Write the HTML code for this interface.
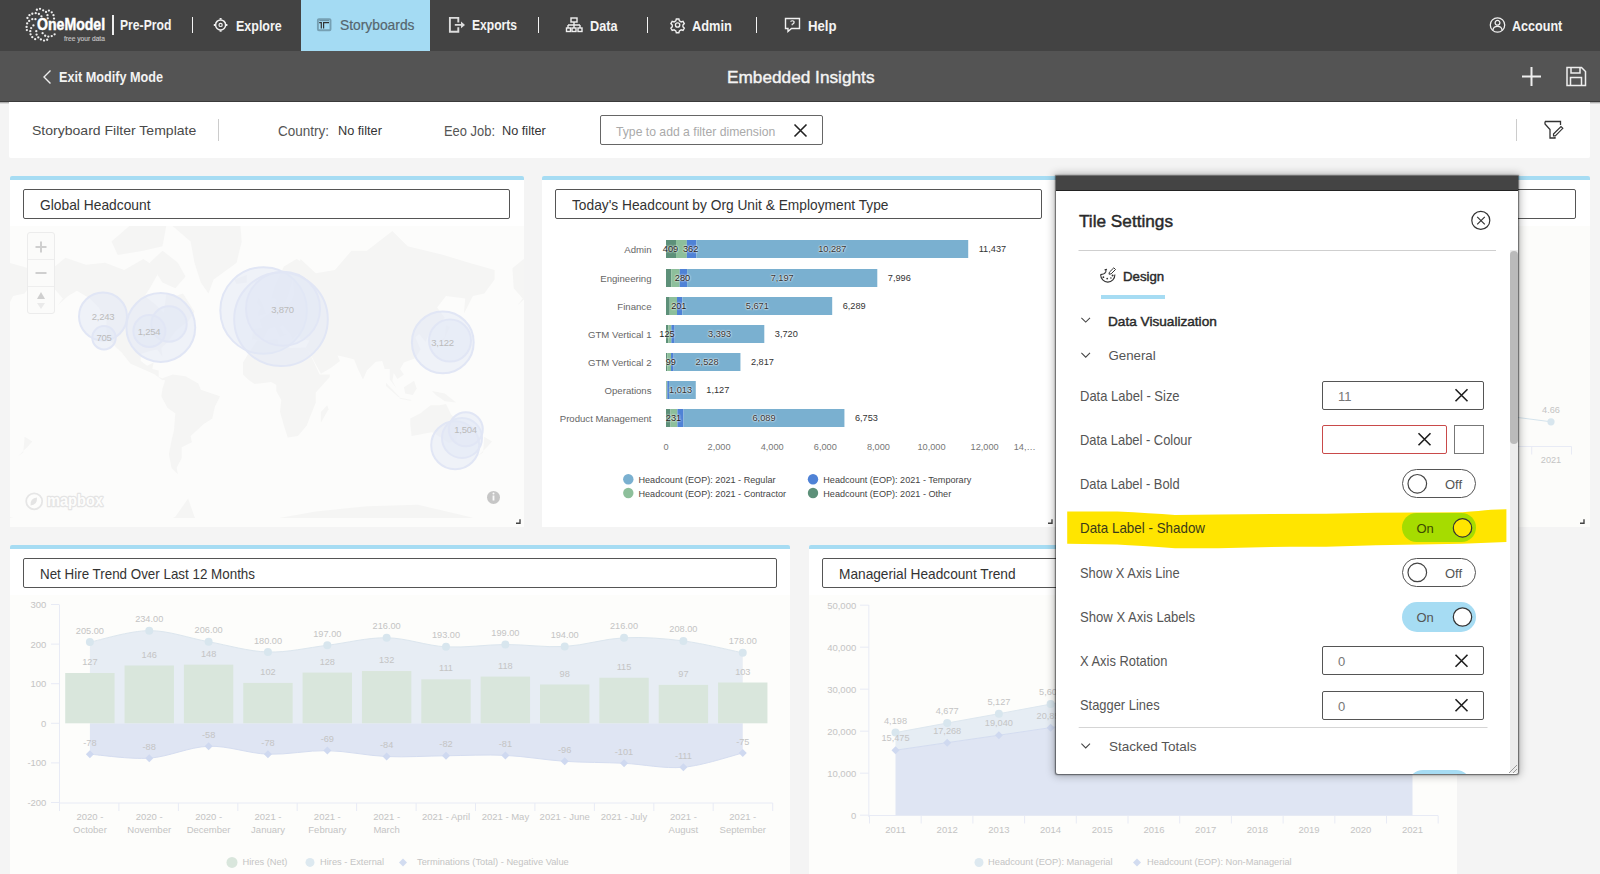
<!DOCTYPE html><html><head><meta charset="utf-8"><style>
html,body{margin:0;padding:0;}body{width:1600px;height:874px;overflow:hidden;position:relative;background:#f4f4f4;font-family:"Liberation Sans",sans-serif;}
div{box-sizing:border-box;}svg{position:absolute;overflow:visible;}
</style></head><body>
<div style="position:absolute;left:0px;top:0px;width:1600px;height:51px;background:#434343;"></div>
<div style="position:absolute;left:301px;top:0px;width:129px;height:51px;background:#a4dbf3;"></div>
<svg style="left:0;top:0" width="120" height="50"><circle cx="36.88" cy="9.73" r="1.15" fill="#eee"/><circle cx="40.02" cy="8.87" r="1.15" fill="#eee"/><circle cx="43.17" cy="10.30" r="1.15" fill="#eee"/><circle cx="46.03" cy="12.01" r="1.15" fill="#eee"/><circle cx="48.89" cy="10.58" r="1.15" fill="#eee"/><circle cx="51.75" cy="12.30" r="1.15" fill="#eee"/><circle cx="53.47" cy="15.16" r="1.15" fill="#eee"/><circle cx="54.04" cy="18.59" r="1.15" fill="#eee"/><circle cx="47.46" cy="15.16" r="1.15" fill="#eee"/><circle cx="47.75" cy="18.31" r="1.15" fill="#eee"/><circle cx="32.30" cy="13.73" r="1.15" fill="#eee"/><circle cx="35.73" cy="13.16" r="1.15" fill="#eee"/><circle cx="38.88" cy="14.02" r="1.15" fill="#eee"/><circle cx="41.45" cy="16.30" r="1.15" fill="#eee"/><circle cx="29.44" cy="15.16" r="1.15" fill="#eee"/><circle cx="27.44" cy="18.02" r="1.15" fill="#eee"/><circle cx="29.15" cy="20.88" r="1.15" fill="#eee"/><circle cx="32.30" cy="19.16" r="1.15" fill="#eee"/><circle cx="35.45" cy="19.16" r="1.15" fill="#eee"/><circle cx="27.15" cy="23.46" r="1.15" fill="#eee"/><circle cx="33.44" cy="25.46" r="1.15" fill="#eee"/><circle cx="26.58" cy="26.89" r="1.15" fill="#eee"/><circle cx="31.16" cy="28.03" r="1.15" fill="#eee"/><circle cx="26.86" cy="30.03" r="1.15" fill="#eee"/><circle cx="30.30" cy="31.18" r="1.15" fill="#eee"/><circle cx="36.30" cy="31.18" r="1.15" fill="#eee"/><circle cx="30.58" cy="34.32" r="1.15" fill="#eee"/><circle cx="36.59" cy="34.61" r="1.15" fill="#eee"/><circle cx="32.30" cy="37.19" r="1.15" fill="#eee"/><circle cx="38.31" cy="37.47" r="1.15" fill="#eee"/><circle cx="35.16" cy="39.19" r="1.15" fill="#eee"/><circle cx="40.88" cy="39.47" r="1.15" fill="#eee"/><circle cx="44.03" cy="40.62" r="1.15" fill="#eee"/><circle cx="47.17" cy="39.76" r="1.15" fill="#eee"/><circle cx="42.60" cy="33.18" r="1.15" fill="#eee"/><circle cx="45.17" cy="35.76" r="1.15" fill="#eee"/><circle cx="48.32" cy="36.61" r="1.15" fill="#eee"/><circle cx="51.75" cy="36.04" r="1.15" fill="#eee"/><circle cx="54.61" cy="34.32" r="1.15" fill="#eee"/></svg>
<div style="position:absolute;left:36.60px;top:17.30px;font-size:15.922px;line-height:15.922px;font-weight:700;color:#fff;white-space:nowrap;transform:scaleX(0.8857);transform-origin:0 0;-webkit-text-stroke:0.45px #fff;">OneModel</div>
<div style="position:absolute;left:63.80px;top:34.60px;font-size:6.983px;line-height:6.983px;font-weight:400;color:#c4c4c4;white-space:nowrap;transform:scaleX(0.9508);transform-origin:0 0;-webkit-text-stroke:0.15px #c4c4c4;">free your data</div>
<div style="position:absolute;left:112px;top:15px;width:2px;height:20px;background:#eee;"></div>
<div style="position:absolute;left:119.60px;top:18.20px;font-size:14.246px;line-height:14.246px;font-weight:700;color:#f4f4f4;white-space:nowrap;transform:scaleX(0.8549);transform-origin:0 0;">Pre-Prod</div>
<div style="position:absolute;left:192px;top:17px;width:1.3px;height:15.5px;background:#f4f4f4;"></div>
<div style="position:absolute;left:538px;top:17px;width:1.3px;height:15.5px;background:#f4f4f4;"></div>
<div style="position:absolute;left:647px;top:17px;width:1.3px;height:15.5px;background:#f4f4f4;"></div>
<div style="position:absolute;left:756px;top:17px;width:1.3px;height:15.5px;background:#f4f4f4;"></div>
<div style="position:absolute;left:236.00px;top:18.50px;font-size:14.385px;line-height:14.385px;font-weight:700;color:#f4f4f4;white-space:nowrap;transform:scaleX(0.8685);transform-origin:0 0;">Explore</div>
<div style="position:absolute;left:339.50px;top:18.40px;font-size:14.106px;line-height:14.106px;font-weight:400;color:#56666e;white-space:nowrap;transform:scaleX(0.9803);transform-origin:0 0;-webkit-text-stroke:0.2px #56666e;">Storyboards</div>
<div style="position:absolute;left:472.20px;top:19.40px;font-size:13.966px;line-height:13.966px;font-weight:700;color:#f4f4f4;white-space:nowrap;transform:scaleX(0.8681);transform-origin:0 0;">Exports</div>
<div style="position:absolute;left:589.80px;top:18.50px;font-size:14.246px;line-height:14.246px;font-weight:700;color:#f4f4f4;white-space:nowrap;transform:scaleX(0.8911);transform-origin:0 0;">Data</div>
<div style="position:absolute;left:692.40px;top:18.50px;font-size:14.246px;line-height:14.246px;font-weight:700;color:#f4f4f4;white-space:nowrap;transform:scaleX(0.9011);transform-origin:0 0;">Admin</div>
<div style="position:absolute;left:807.70px;top:18.50px;font-size:14.246px;line-height:14.246px;font-weight:700;color:#f4f4f4;white-space:nowrap;transform:scaleX(0.9268);transform-origin:0 0;">Help</div>
<div style="position:absolute;left:1511.50px;top:18.90px;font-size:14.385px;line-height:14.385px;font-weight:700;color:#f4f4f4;white-space:nowrap;transform:scaleX(0.8748);transform-origin:0 0;">Account</div>
<svg style="left:0;top:0" width="1600" height="50" fill="none" stroke="#f0f0f0" stroke-width="1.5">
<g transform="translate(220.6,24.9)"><circle r="5" /><circle r="1.6" stroke-width="1.2"/><path d="M0,-6.8v1.5M0,6.8v-1.5M-6.8,0h1.5M6.8,0h-1.5" stroke-width="2"/></g>
<g><rect x="317.9" y="19.1" width="12.6" height="11.2" rx="1" stroke="#76a0b3" stroke-width="1.9"/><path d="M319.3,20.6H329" stroke="#6a8fa0" stroke-width="1.1"/><path d="M319.2,22.6H321.3V28.4M323.6,28.4V22.6H329" stroke="#333" stroke-width="1.2"/></g>
<g stroke="#ddd" stroke-width="1.9"><path d="M458.3,22.6V17.9H449.9V31.8H458.3V27.2M454.8,24.9H461.5"/><path d="M461,21.6L465,24.9L461,28.2Z" fill="#ddd" stroke="none"/></g>
<g stroke-width="1.4"><rect x="571" y="18" width="6" height="4"/><path d="M574,22v3M568,25h12M568,25v3M574,25v3M580,25v3"/><rect x="566.5" y="28" width="4" height="3.5"/><rect x="572" y="28" width="4" height="3.5"/><rect x="578" y="28" width="4" height="3.5"/></g>
<g transform="translate(677.6,25) scale(0.86)" stroke-width="1.6"><circle r="2.5"/><path d="M-1.5,-7h3l0.6,2.2l2,1.2l2.2,-0.7l1.5,2.6l-1.6,1.6v2.2l1.6,1.6l-1.5,2.6l-2.2,-0.7l-2,1.2l-0.6,2.2h-3l-0.6,-2.2l-2,-1.2l-2.2,0.7l-1.5,-2.6l1.6,-1.6v-2.2l-1.6,-1.6l1.5,-2.6l2.2,0.7l2,-1.2z"/></g>
<g stroke-width="1.4"><path d="M785.5,18.5h14v10h-8l-3.5,3v-3h-2.5z"/><path d="M790.5,21.5q2,-1.5 3.5,0q0.5,2 -1.8,2.8v1" stroke-width="1.2"/></g>
<g transform="translate(1497.5,25)" stroke-width="1.3"><circle r="7.2"/><circle cy="-2.2" r="2.4"/><path d="M-4.6,5.2q0.5,-3.8 4.6,-3.8q4.1,0 4.6,3.8"/></g>
</svg>
<div style="position:absolute;left:0px;top:51px;width:1600px;height:50px;background:#545454;"></div>
<div style="position:absolute;left:0px;top:101px;width:1600px;height:1px;background:#3a3a3a;"></div>
<div style="position:absolute;left:0px;top:102px;width:1600px;height:1.5px;background:linear-gradient(#9a9a9a,#f0f0f0);"></div>
<svg style="left:0;top:50" width="1600" height="52" fill="none" stroke="#eee" stroke-width="1.4"><path d="M50.5,20.5l-6.5,6.5l6.5,6.5"/><path d="M1531.5,17v19M1522,26.5h19" stroke-width="2"/><path d="M1567,17.5h14.5l4,4v14h-18.5z" stroke-width="1.5"/><path d="M1571,17.5v5.5h9v-5.5M1570.5,35.5v-8h11v8" stroke-width="1.5"/></svg>
<div style="position:absolute;left:58.75px;top:70.20px;font-size:14.246px;line-height:14.246px;font-weight:700;color:#f2f2f2;white-space:nowrap;transform:scaleX(0.8885);transform-origin:0 0;">Exit Modify Mode</div>
<div style="position:absolute;left:726.50px;top:69.75px;font-size:16.969px;line-height:16.969px;font-weight:400;color:#f4f4f4;white-space:nowrap;transform:scaleX(1.0163);transform-origin:0 0;-webkit-text-stroke:0.4px #f4f4f4;">Embedded Insights</div>
<div style="position:absolute;left:9px;top:102px;width:1581px;height:56px;background:#fff;border-radius:0 0 2px 2px;"></div>
<div style="position:absolute;left:32.25px;top:124.40px;font-size:13.547px;line-height:13.547px;font-weight:400;color:#4a4a4a;white-space:nowrap;transform:scaleX(1.0367);transform-origin:0 0;">Storyboard Filter Template</div>
<div style="position:absolute;left:218px;top:119px;width:1px;height:22px;background:#ccc;"></div>
<div style="position:absolute;left:277.90px;top:123.60px;font-size:14.246px;line-height:14.246px;font-weight:400;color:#555;white-space:nowrap;transform:scaleX(0.9480);transform-origin:0 0;">Country:</div>
<div style="position:absolute;left:337.90px;top:124.60px;font-size:12.709px;line-height:12.709px;font-weight:400;color:#333;white-space:nowrap;transform:scaleX(1.0041);transform-origin:0 0;">No filter</div>
<div style="position:absolute;left:443.50px;top:123.60px;font-size:14.246px;line-height:14.246px;font-weight:400;color:#555;white-space:nowrap;transform:scaleX(0.9077);transform-origin:0 0;">Eeo Job:</div>
<div style="position:absolute;left:502.40px;top:124.60px;font-size:12.709px;line-height:12.709px;font-weight:400;color:#333;white-space:nowrap;transform:scaleX(1.0019);transform-origin:0 0;">No filter</div>
<div style="position:absolute;left:600px;top:115px;width:223px;height:30px;border:1px solid #666;border-radius:2px;background:#fff;"></div>
<div style="position:absolute;left:616.0px;top:125.8px;font-size:12.2px;line-height:12.2px;font-weight:400;color:#aaa;white-space:nowrap;">Type to add a filter dimension</div>
<svg style="left:0;top:0" width="1600" height="160" fill="none" stroke="#222" stroke-width="1.6"><path d="M794.5,124.5l12,12M806.5,124.5l-12,12"/></svg>
<div style="position:absolute;left:1516px;top:119px;width:1px;height:22px;background:#ccc;"></div>
<svg style="left:0;top:0" width="1600" height="160" fill="none" stroke="#333" stroke-width="1.3"><path d="M1545,121.5h15.5v3.5M1545,121.5v2.5l5,5.5v8.5h5v-1"/><path d="M1553.5,134l7.5,-7.5l1.8,1.8l-7.5,7.5h-1.8z" stroke-width="1.2"/></svg>
<div style="position:absolute;left:10px;top:176px;width:514px;height:351px;background:#fff;border-top:4px solid #a6dcf3;border-radius:2px 2px 0 0;"></div>
<div style="position:absolute;left:23px;top:189px;width:486.5px;height:29.5px;border:1px solid #555;border-radius:2px;background:#fff;"></div>
<div style="position:absolute;left:40.00px;top:198.50px;font-size:13.966px;line-height:13.966px;font-weight:400;color:#333;white-space:nowrap;transform:scaleX(0.9892);transform-origin:0 0;">Global Headcount</div>
<div style="position:absolute;left:542px;top:176px;width:515px;height:351px;background:#fff;border-top:4px solid #a6dcf3;border-radius:2px 2px 0 0;"></div>
<div style="position:absolute;left:555px;top:189px;width:487.0px;height:29.5px;border:1px solid #555;border-radius:2px;background:#fff;"></div>
<div style="position:absolute;left:572.00px;top:198.50px;font-size:13.966px;line-height:13.966px;font-weight:400;color:#333;white-space:nowrap;transform:scaleX(0.9855);transform-origin:0 0;">Today&#39;s Headcount by Org Unit &amp; Employment Type</div>
<div style="position:absolute;left:1076px;top:176px;width:514px;height:351px;background:#fff;border-top:4px solid #a6dcf3;border-radius:2px 2px 0 0;"></div>
<div style="position:absolute;left:1089px;top:189px;width:487.0px;height:29.5px;border:1px solid #555;border-radius:2px;background:#fff;"></div>
<div style="position:absolute;left:10px;top:545px;width:780px;height:340px;background:#fff;border-top:4px solid #a6dcf3;border-radius:2px 2px 0 0;"></div>
<div style="position:absolute;left:23px;top:558px;width:754.0px;height:29.5px;border:1px solid #555;border-radius:2px;background:#fff;"></div>
<div style="position:absolute;left:40.00px;top:567.50px;font-size:13.966px;line-height:13.966px;font-weight:400;color:#333;white-space:nowrap;transform:scaleX(0.9593);transform-origin:0 0;">Net Hire Trend Over Last 12 Months</div>
<div style="position:absolute;left:809px;top:545px;width:648px;height:340px;background:#fff;border-top:4px solid #a6dcf3;border-radius:2px 2px 0 0;"></div>
<div style="position:absolute;left:822px;top:558px;width:620.5px;height:29.5px;border:1px solid #555;border-radius:2px;background:#fff;"></div>
<div style="position:absolute;left:839.00px;top:567.50px;font-size:13.966px;line-height:13.966px;font-weight:400;color:#333;white-space:nowrap;transform:scaleX(0.9814);transform-origin:0 0;">Managerial Headcount Trend</div>
<div style="position:absolute;left:10px;top:226px;width:514px;height:301px;background:#fcfcfb;"></div>
<div style="position:absolute;left:10px;top:595px;width:780px;height:279px;background:#fdfdfb;"></div>
<div style="position:absolute;left:809px;top:595px;width:648px;height:279px;background:#fdfdfb;"></div>
<div style="position:absolute;left:1076px;top:226px;width:514px;height:301px;background:#fcfcfa;"></div>
<svg style="left:0;top:0" width="1600" height="874"><defs><clipPath id="mapclip"><rect x="10" y="226" width="514" height="292"/></clipPath></defs>
<g clip-path="url(#mapclip)" fill="#f5f5f4"><path d="M52.7,268.2 L65.5,257.8 L85.9,264.7 L105.1,262.8 L124.2,270.0 L143.4,259.0 L160.0,270.0 L149.8,288.2 L144.7,296.0 L156.2,305.3 L163.8,312.8 L166.4,293.4 L175.3,296.0 L183.0,293.4 L194.5,311.8 L188.1,321.6 L180.4,327.1 L175.3,331.5 L167.6,342.0 L161.3,348.1 L162.5,356.8 L157.4,349.6 L149.8,351.1 L140.8,354.0 L140.8,361.0 L147.2,365.8 L153.6,362.4 L152.3,369.1 L158.7,370.4 L158.7,377.0 L166.4,379.6 L162.5,380.2 L154.9,374.4 L147.2,371.1 L130.6,363.7 L121.7,352.5 L115.3,346.6 L108.9,338.9 L106.4,330.6 L106.4,319.7 L98.7,307.5 L89.8,298.4 L77.0,290.8 L68.0,296.0 L57.8,305.3 L62.9,298.4 L54.0,288.2Z"/><path d="M512.4,268.2 L525.2,257.8 L545.6,264.7 L564.8,262.8 L584.0,270.0 L603.1,259.0 L619.7,270.0 L609.5,288.2 L604.4,296.0 L615.9,305.3 L623.5,312.8 L626.1,293.4 L635.0,296.0 L642.7,293.4 L654.2,311.8 L647.8,321.6 L640.1,327.1 L635.0,331.5 L627.4,342.0 L621.0,348.1 L622.3,356.8 L617.2,349.6 L609.5,351.1 L600.6,354.0 L600.6,361.0 L606.9,365.8 L613.3,362.4 L612.0,369.1 L618.4,370.4 L618.4,377.0 L626.1,379.6 L622.3,380.2 L614.6,374.4 L606.9,371.1 L590.3,363.7 L581.4,352.5 L575.0,346.6 L568.6,338.9 L566.1,330.6 L566.1,319.7 L558.4,307.5 L549.5,298.4 L536.7,290.8 L527.8,296.0 L517.5,305.3 L522.7,298.4 L513.7,288.2Z"/><path d="M171.5,225.0 L188.1,195.2 L226.4,185.4 L239.2,211.5 L241.7,241.4 L236.6,262.8 L213.6,279.6 L208.5,293.4 L200.8,282.5 L194.5,262.8 L190.6,241.4Z"/><path d="M111.5,241.4 L130.6,225.0 L143.4,211.5 L168.9,211.5 L162.5,246.2 L143.4,250.7 L117.8,255.0Z"/><path d="M149.8,262.8 L162.5,250.7 L177.9,262.8 L185.5,276.5 L175.3,288.2 L162.5,282.5Z"/><path d="M162.5,378.3 L172.8,374.4 L185.5,376.3 L198.3,383.4 L200.8,389.8 L220.0,396.2 L214.9,406.5 L212.3,418.6 L203.4,424.2 L190.6,436.0 L191.9,442.3 L181.7,447.3 L181.7,458.0 L176.6,467.8 L177.9,474.3 L171.5,467.8 L168.9,454.3 L171.5,440.7 L174.0,430.0 L175.3,413.2 L167.6,407.9 L161.3,396.2 L162.5,388.5 L165.1,380.8Z"/><path d="M-207.8,340.5 L-206.5,328.9 L-197.6,328.0 L-200.1,319.7 L-191.2,313.8 L-184.8,307.5 L-183.5,300.8 L-179.7,303.1 L-172.0,305.3 L-168.2,300.8 L-165.6,293.4 L-166.9,279.6 L-163.1,276.5 L-159.3,259.0 L-143.9,273.3 L-124.8,270.0 L-108.2,250.7 L-92.9,250.7 L-67.3,230.9 L-52.0,246.2 L-16.2,255.0 L9.3,262.8 L34.8,270.0 L34.8,279.6 L24.6,293.4 L13.1,296.0 L4.2,313.8 L5.5,298.4 L-13.7,296.0 L-22.6,307.5 L-15.0,317.8 L-27.7,328.9 L-31.6,335.6 L-34.1,342.0 L-40.5,334.0 L-44.3,337.3 L-39.2,349.6 L-44.3,358.2 L-55.8,362.4 L-59.7,369.1 L-55.8,374.4 L-62.2,378.9 L-66.0,373.1 L-67.3,380.8 L-63.5,387.9 L-69.9,379.6 L-69.9,369.1 L-75.0,369.1 L-77.5,361.0 L-83.9,361.7 L-92.9,370.4 L-96.7,379.6 L-101.8,369.1 L-105.6,359.6 L-115.8,356.8 L-122.2,355.4 L-119.7,361.0 L-128.6,367.8 L-138.8,373.7 L-141.4,369.1 L-150.3,352.5 L-154.2,348.1 L-150.3,340.5 L-159.3,338.9 L-161.8,334.0 L-165.6,337.3 L-166.9,339.7 L-169.5,334.0 L-177.1,325.3 L-179.7,327.1 L-175.9,334.0 L-172.0,334.0 L-179.7,337.3 L-184.8,327.1 L-191.2,328.9 L-196.3,338.9 L-201.4,340.5 L-206.5,338.9Z"/><path d="M251.9,340.5 L253.2,328.9 L262.1,328.0 L259.6,319.7 L268.5,313.8 L274.9,307.5 L276.2,300.8 L280.0,303.1 L287.7,305.3 L291.5,300.8 L294.1,293.4 L292.8,279.6 L296.6,276.5 L300.5,259.0 L315.8,273.3 L334.9,270.0 L351.5,250.7 L366.9,250.7 L392.4,230.9 L407.7,246.2 L443.5,255.0 L469.0,262.8 L494.6,270.0 L494.6,279.6 L484.3,293.4 L472.9,296.0 L463.9,313.8 L465.2,298.4 L446.0,296.0 L437.1,307.5 L444.8,317.8 L432.0,328.9 L428.2,335.6 L425.6,342.0 L419.2,334.0 L415.4,337.3 L420.5,349.6 L415.4,358.2 L403.9,362.4 L400.1,369.1 L403.9,374.4 L397.5,378.9 L393.7,373.1 L392.4,380.8 L396.2,387.9 L389.8,379.6 L389.8,369.1 L384.7,369.1 L382.2,361.0 L375.8,361.7 L366.9,370.4 L363.0,379.6 L357.9,369.1 L354.1,359.6 L343.9,356.8 L337.5,355.4 L340.0,361.0 L331.1,367.8 L320.9,373.7 L318.3,369.1 L309.4,352.5 L305.6,348.1 L309.4,340.5 L300.5,338.9 L297.9,334.0 L294.1,337.3 L292.8,339.7 L290.2,334.0 L282.6,325.3 L280.0,327.1 L283.9,334.0 L287.7,334.0 L280.0,337.3 L274.9,327.1 L268.5,328.9 L263.4,338.9 L258.3,340.5 L253.2,338.9Z"/><path d="M271.1,298.4 L274.9,285.4 L283.9,266.5 L296.6,259.0 L303.0,262.8 L300.5,276.5 L292.8,279.6 L289.0,293.4 L285.1,303.1 L280.0,303.1 L274.9,298.4Z"/><path d="M243.0,370.4 L243.0,362.4 L248.1,354.0 L253.2,346.6 L257.0,340.8 L277.5,338.9 L278.7,345.1 L290.2,348.1 L305.6,347.4 L309.4,352.5 L319.6,374.4 L329.8,374.4 L329.8,377.0 L315.8,392.4 L315.8,402.6 L309.4,418.6 L306.8,425.6 L297.9,436.0 L287.7,437.6 L283.9,425.6 L280.0,411.8 L281.3,400.0 L276.2,391.1 L276.2,384.7 L271.1,382.1 L259.6,383.4 L254.5,384.0 L248.1,379.6 L243.0,374.4Z"/><path d="M410.3,418.6 L420.5,413.2 L430.7,405.2 L439.6,405.2 L446.0,403.9 L451.1,414.5 L460.1,424.2 L456.2,440.7 L448.6,443.1 L440.9,437.6 L432.0,432.2 L411.6,436.0 L410.3,424.2Z"/><path d="M386.0,382.8 L400.1,397.5 L397.5,396.2 L386.0,386.0Z"/><path d="M403.9,387.2 L414.1,380.8 L416.7,388.5 L412.8,394.9 L405.2,393.6Z"/><path d="M432.0,391.1 L444.8,393.6 L456.2,402.6 L444.8,401.3 L435.8,394.9Z"/><path d="M398.8,397.5 L411.6,400.0 L410.3,400.7 L400.1,398.8Z"/><path d="M430.7,348.1 L437.1,343.6 L444.8,337.3 L446.0,325.3 L449.9,327.1 L443.5,340.5 L433.3,345.1Z"/><path d="M258.3,315.9 L266.0,313.8 L262.1,303.1 L258.3,297.2 L257.0,303.1 L260.9,307.5 L258.3,311.8Z"/><path d="M234.1,279.6 L246.8,274.9 L246.8,282.5 L236.6,284.0Z"/><path d="M320.9,422.8 L328.5,409.2 L327.3,405.2 L320.9,411.8Z"/><path d="M24.6,436.8 L32.3,441.5 L27.2,447.3 L18.2,456.1 L23.3,452.5Z"/><path d="M484.3,436.8 L492.0,441.5 L486.9,447.3 L478.0,456.1 L483.1,452.5Z"/><path d="M-424.9,524.6 L-386.6,543.3 L-348.3,533.4 L-309.9,528.9 L-284.4,516.8 L-271.6,498.5 L-265.3,516.8 L-246.1,554.6 L-195.0,520.6 L-143.9,511.4 L-92.9,506.3 L-41.8,504.7 L9.3,516.8 L34.8,524.6 L34.8,618.9 L-424.9,618.9Z"/><path d="M34.8,524.6 L73.2,543.3 L111.5,533.4 L149.8,528.9 L175.3,516.8 L188.1,498.5 L194.5,516.8 L213.6,554.6 L264.7,520.6 L315.8,511.4 L366.9,506.3 L417.9,504.7 L469.0,516.8 L494.6,524.6 L494.6,618.9 L34.8,618.9Z"/><path d="M494.6,524.6 L532.9,543.3 L571.2,533.4 L609.5,528.9 L635.0,516.8 L647.8,498.5 L654.2,516.8 L673.3,554.6 L724.4,520.6 L775.5,511.4 L826.6,506.3 L877.7,504.7 L928.7,516.8 L954.3,524.6 L954.3,618.9 L494.6,618.9Z"/></g>
<g fill="#e2e7f6" fill-opacity="0.5" stroke="#e1e6f5" stroke-width="2">
<circle cx="103" cy="316.5" r="24"/><circle cx="104" cy="337.8" r="11.7"/>
<circle cx="160.8" cy="327.5" r="34.4"/><circle cx="169" cy="324" r="17.7"/><circle cx="149.4" cy="331" r="16"/>
<circle cx="263.6" cy="310.5" r="43.3"/><circle cx="281" cy="319.3" r="46.8"/><circle cx="283" cy="308.7" r="37"/>
<circle cx="442.8" cy="342.4" r="30.9"/><circle cx="450" cy="340.6" r="21"/>
<circle cx="455.2" cy="445.3" r="24"/><circle cx="462" cy="438" r="20"/><circle cx="465.8" cy="429.3" r="17"/>
</g></svg>
<div style="position:absolute;left:-397.0px;width:1000px;text-align:center;top:311.9px;font-size:9.5px;line-height:9.5px;font-weight:400;color:#bbb;white-space:nowrap;letter-spacing:-0.3px;">2,243</div>
<div style="position:absolute;left:-396.0px;width:1000px;text-align:center;top:333.2px;font-size:9.5px;line-height:9.5px;font-weight:400;color:#bbb;white-space:nowrap;letter-spacing:-0.3px;">705</div>
<div style="position:absolute;left:-351.0px;width:1000px;text-align:center;top:326.9px;font-size:9.5px;line-height:9.5px;font-weight:400;color:#bbb;white-space:nowrap;letter-spacing:-0.3px;">1,254</div>
<div style="position:absolute;left:-217.5px;width:1000px;text-align:center;top:305.4px;font-size:9.5px;line-height:9.5px;font-weight:400;color:#bbb;white-space:nowrap;letter-spacing:-0.3px;">3,870</div>
<div style="position:absolute;left:-57.5px;width:1000px;text-align:center;top:338.1px;font-size:9.5px;line-height:9.5px;font-weight:400;color:#bbb;white-space:nowrap;letter-spacing:-0.3px;">3,122</div>
<div style="position:absolute;left:-34.5px;width:1000px;text-align:center;top:424.7px;font-size:9.5px;line-height:9.5px;font-weight:400;color:#bbb;white-space:nowrap;letter-spacing:-0.3px;">1,504</div>
<div style="position:absolute;left:27px;top:232px;width:28px;height:82px;border:1px solid #ececec;border-radius:3px;background:#fbfbfa;"></div>
<div style="position:absolute;left:28px;top:259px;width:26px;height:1px;background:#eee;"></div>
<div style="position:absolute;left:28px;top:286px;width:26px;height:1px;background:#eee;"></div>
<svg style="left:0;top:0" width="100" height="330"><path d="M41,241.5v11M35.5,247h11M35.5,273h11" stroke="#cfcfcf" stroke-width="2"/><path d="M41,292l-4,7h8z" fill="#cfcfcf"/><path d="M41,309l-4,-6h8z" fill="#eaeaea"/></svg>
<svg style="left:0;top:0" width="520" height="526"><circle cx="34.2" cy="501.3" r="8" fill="#fdfdfc" stroke="#e6e6e6" stroke-width="1.8"/><path d="M30.5,505.5 Q30,498 37,497.5 Q37.5,505 30.5,505.5Z" fill="#e4e4e4"/><circle cx="493.5" cy="497.4" r="6.5" fill="#c6c6c6"/><rect x="492.6" y="495.5" width="1.8" height="5" fill="#fafafa"/><circle cx="493.5" cy="493.6" r="1" fill="#fafafa"/><path d="M516,523.3h4v-4" stroke="#444" stroke-width="1.4" fill="none"/><path d="M1048,523.3h4v-4M1580,523.3h4v-4" stroke="#444" stroke-width="1.4" fill="none"/></svg>
<svg style="left:0;top:0" width="200" height="530"><text x="47" y="506.3" font-family="Liberation Sans" font-weight="700" font-size="17" textLength="56" lengthAdjust="spacingAndGlyphs" fill="#fdfdfc" stroke="#e4e4e4" stroke-width="2.6" paint-order="stroke" stroke-linejoin="round">mapbox</text></svg>
<svg style="left:0;top:0" width="1100" height="530"><rect x="666.00" y="240" width="10.02" height="18" fill="#5d9079"/><rect x="676.02" y="240" width="10.81" height="18" fill="#8dbf9b"/><rect x="686.82" y="240" width="9.57" height="18" fill="#4f82d6"/><rect x="696.39" y="240" width="271.83" height="18" fill="#7ab0d0"/><rect x="666.00" y="269" width="5.29" height="18" fill="#5d9079"/><rect x="671.28" y="269" width="8.43" height="18" fill="#8dbf9b"/><rect x="679.71" y="269" width="7.40" height="18" fill="#4f82d6"/><rect x="687.11" y="269" width="190.18" height="18" fill="#7ab0d0"/><rect x="666.00" y="297" width="3.70" height="18" fill="#5d9079"/><rect x="669.70" y="297" width="7.32" height="18" fill="#8dbf9b"/><rect x="677.02" y="297" width="5.31" height="18" fill="#4f82d6"/><rect x="682.33" y="297" width="149.86" height="18" fill="#7ab0d0"/><rect x="666.00" y="325" width="2.38" height="18" fill="#5d9079"/><rect x="668.38" y="325" width="2.96" height="18" fill="#8dbf9b"/><rect x="671.34" y="325" width="3.30" height="18" fill="#4f82d6"/><rect x="674.64" y="325" width="89.66" height="18" fill="#7ab0d0"/><rect x="666.00" y="353" width="1.45" height="18" fill="#5d9079"/><rect x="667.45" y="353" width="3.57" height="18" fill="#8dbf9b"/><rect x="671.02" y="353" width="2.62" height="18" fill="#4f82d6"/><rect x="673.64" y="353" width="66.80" height="18" fill="#7ab0d0"/><rect x="666.00" y="381" width="0.53" height="18" fill="#5d9079"/><rect x="666.53" y="381" width="0.79" height="18" fill="#8dbf9b"/><rect x="667.32" y="381" width="1.69" height="18" fill="#4f82d6"/><rect x="669.01" y="381" width="26.77" height="18" fill="#7ab0d0"/><rect x="666.00" y="409" width="4.49" height="18" fill="#5d9079"/><rect x="670.49" y="409" width="6.92" height="18" fill="#8dbf9b"/><rect x="677.42" y="409" width="6.10" height="18" fill="#4f82d6"/><rect x="683.52" y="409" width="160.90" height="18" fill="#7ab0d0"/></svg>
<div style="position:absolute;right:948.5px;top:244.6px;font-size:9.6px;line-height:9.6px;font-weight:400;color:#666;white-space:nowrap;">Admin</div>
<div style="position:absolute;left:332.3px;width:1000px;text-align:center;top:244.8px;font-size:9.2px;line-height:9.2px;font-weight:400;color:#333;white-space:nowrap;text-shadow:0 0 2px #fff,0 0 2px #fff;">10,287</div>
<div style="position:absolute;left:170.5px;width:1000px;text-align:center;top:244.8px;font-size:9.2px;line-height:9.2px;font-weight:400;color:#222;white-space:nowrap;text-shadow:0 0 2px #fff,0 0 2px #fff;">409</div>
<div style="position:absolute;left:190.6px;width:1000px;text-align:center;top:244.8px;font-size:9.2px;line-height:9.2px;font-weight:400;color:#222;white-space:nowrap;text-shadow:0 0 2px #fff,0 0 2px #fff;">362</div>
<div style="position:absolute;left:978.7px;top:244.8px;font-size:9.2px;line-height:9.2px;font-weight:400;color:#333;white-space:nowrap;">11,437</div>
<div style="position:absolute;right:948.5px;top:273.6px;font-size:9.6px;line-height:9.6px;font-weight:400;color:#666;white-space:nowrap;">Engineering</div>
<div style="position:absolute;left:282.2px;width:1000px;text-align:center;top:273.8px;font-size:9.2px;line-height:9.2px;font-weight:400;color:#333;white-space:nowrap;text-shadow:0 0 2px #fff,0 0 2px #fff;">7,197</div>
<div style="position:absolute;left:182.5px;width:1000px;text-align:center;top:273.8px;font-size:9.2px;line-height:9.2px;font-weight:400;color:#222;white-space:nowrap;text-shadow:0 0 2px #fff,0 0 2px #fff;">280</div>
<div style="position:absolute;left:887.8px;top:273.8px;font-size:9.2px;line-height:9.2px;font-weight:400;color:#333;white-space:nowrap;">7,996</div>
<div style="position:absolute;right:948.5px;top:301.6px;font-size:9.6px;line-height:9.6px;font-weight:400;color:#666;white-space:nowrap;">Finance</div>
<div style="position:absolute;left:257.3px;width:1000px;text-align:center;top:301.8px;font-size:9.2px;line-height:9.2px;font-weight:400;color:#333;white-space:nowrap;text-shadow:0 0 2px #fff,0 0 2px #fff;">5,671</div>
<div style="position:absolute;left:178.8px;width:1000px;text-align:center;top:301.8px;font-size:9.2px;line-height:9.2px;font-weight:400;color:#222;white-space:nowrap;text-shadow:0 0 2px #fff,0 0 2px #fff;">201</div>
<div style="position:absolute;left:842.7px;top:301.8px;font-size:9.2px;line-height:9.2px;font-weight:400;color:#333;white-space:nowrap;">6,289</div>
<div style="position:absolute;right:948.5px;top:329.6px;font-size:9.6px;line-height:9.6px;font-weight:400;color:#666;white-space:nowrap;">GTM Vertical 1</div>
<div style="position:absolute;left:219.5px;width:1000px;text-align:center;top:329.8px;font-size:9.2px;line-height:9.2px;font-weight:400;color:#333;white-space:nowrap;text-shadow:0 0 2px #fff,0 0 2px #fff;">3,393</div>
<div style="position:absolute;left:167.0px;width:1000px;text-align:center;top:329.8px;font-size:9.2px;line-height:9.2px;font-weight:400;color:#222;white-space:nowrap;text-shadow:0 0 2px #fff,0 0 2px #fff;">125</div>
<div style="position:absolute;left:774.8px;top:329.8px;font-size:9.2px;line-height:9.2px;font-weight:400;color:#333;white-space:nowrap;">3,720</div>
<div style="position:absolute;right:948.5px;top:357.6px;font-size:9.6px;line-height:9.6px;font-weight:400;color:#666;white-space:nowrap;">GTM Vertical 2</div>
<div style="position:absolute;left:207.0px;width:1000px;text-align:center;top:357.8px;font-size:9.2px;line-height:9.2px;font-weight:400;color:#333;white-space:nowrap;text-shadow:0 0 2px #fff,0 0 2px #fff;">2,528</div>
<div style="position:absolute;left:170.8px;width:1000px;text-align:center;top:357.8px;font-size:9.2px;line-height:9.2px;font-weight:400;color:#222;white-space:nowrap;text-shadow:0 0 2px #fff,0 0 2px #fff;">99</div>
<div style="position:absolute;left:750.9px;top:357.8px;font-size:9.2px;line-height:9.2px;font-weight:400;color:#333;white-space:nowrap;">2,817</div>
<div style="position:absolute;right:948.5px;top:385.6px;font-size:9.6px;line-height:9.6px;font-weight:400;color:#666;white-space:nowrap;">Operations</div>
<div style="position:absolute;left:180.6px;width:1000px;text-align:center;top:385.8px;font-size:9.2px;line-height:9.2px;font-weight:400;color:#333;white-space:nowrap;text-shadow:0 0 2px #fff,0 0 2px #fff;">1,013</div>
<div style="position:absolute;left:706.3px;top:385.8px;font-size:9.2px;line-height:9.2px;font-weight:400;color:#333;white-space:nowrap;">1,127</div>
<div style="position:absolute;right:948.5px;top:413.6px;font-size:9.6px;line-height:9.6px;font-weight:400;color:#666;white-space:nowrap;">Product Management</div>
<div style="position:absolute;left:264.0px;width:1000px;text-align:center;top:413.8px;font-size:9.2px;line-height:9.2px;font-weight:400;color:#333;white-space:nowrap;text-shadow:0 0 2px #fff,0 0 2px #fff;">6,089</div>
<div style="position:absolute;left:173.5px;width:1000px;text-align:center;top:413.8px;font-size:9.2px;line-height:9.2px;font-weight:400;color:#222;white-space:nowrap;text-shadow:0 0 2px #fff,0 0 2px #fff;">231</div>
<div style="position:absolute;left:854.9px;top:413.8px;font-size:9.2px;line-height:9.2px;font-weight:400;color:#333;white-space:nowrap;">6,753</div>
<div style="position:absolute;left:166.0px;width:1000px;text-align:center;top:442.5px;font-size:9.2px;line-height:9.2px;font-weight:400;color:#777;white-space:nowrap;">0</div>
<div style="position:absolute;left:219.1px;width:1000px;text-align:center;top:442.5px;font-size:9.2px;line-height:9.2px;font-weight:400;color:#777;white-space:nowrap;">2,000</div>
<div style="position:absolute;left:272.2px;width:1000px;text-align:center;top:442.5px;font-size:9.2px;line-height:9.2px;font-weight:400;color:#777;white-space:nowrap;">4,000</div>
<div style="position:absolute;left:325.3px;width:1000px;text-align:center;top:442.5px;font-size:9.2px;line-height:9.2px;font-weight:400;color:#777;white-space:nowrap;">6,000</div>
<div style="position:absolute;left:378.4px;width:1000px;text-align:center;top:442.5px;font-size:9.2px;line-height:9.2px;font-weight:400;color:#777;white-space:nowrap;">8,000</div>
<div style="position:absolute;left:431.5px;width:1000px;text-align:center;top:442.5px;font-size:9.2px;line-height:9.2px;font-weight:400;color:#777;white-space:nowrap;">10,000</div>
<div style="position:absolute;left:484.6px;width:1000px;text-align:center;top:442.5px;font-size:9.2px;line-height:9.2px;font-weight:400;color:#777;white-space:nowrap;">12,000</div>
<div style="position:absolute;left:1013.7px;top:442.5px;font-size:9.2px;line-height:9.2px;font-weight:400;color:#777;white-space:nowrap;">14,…</div>
<svg style="left:0;top:0" width="1000" height="500"><circle cx="628.3" cy="479.3" r="5.2" fill="#7ab0d0"/><circle cx="628.3" cy="493" r="5.2" fill="#8dbf9b"/><circle cx="813" cy="479.3" r="5.2" fill="#4f82d6"/><circle cx="813" cy="493" r="5.2" fill="#5d9079"/></svg>
<div style="position:absolute;left:638.5px;top:476.4px;font-size:9.1px;line-height:9.1px;font-weight:400;color:#444;white-space:nowrap;">Headcount (EOP): 2021 - Regular</div>
<div style="position:absolute;left:638.5px;top:489.9px;font-size:9.1px;line-height:9.1px;font-weight:400;color:#444;white-space:nowrap;">Headcount (EOP): 2021 - Contractor</div>
<div style="position:absolute;left:823.3px;top:476.4px;font-size:9.1px;line-height:9.1px;font-weight:400;color:#444;white-space:nowrap;">Headcount (EOP): 2021 - Temporary</div>
<div style="position:absolute;left:823.3px;top:489.9px;font-size:9.1px;line-height:9.1px;font-weight:400;color:#444;white-space:nowrap;">Headcount (EOP): 2021 - Other</div>
<svg style="left:0;top:0" width="800" height="874"><path d="M59.5,605v206M59.5,803H772.7" stroke="#e8ebf5" stroke-width="1" fill="none"/><path d="M51,604.5h8.5" stroke="#e8ebf5" stroke-width="1"/><path d="M51,644.1h8.5" stroke="#e8ebf5" stroke-width="1"/><path d="M51,683.7h8.5" stroke="#e8ebf5" stroke-width="1"/><path d="M51,723.3h8.5" stroke="#e8ebf5" stroke-width="1"/><path d="M51,762.9h8.5" stroke="#e8ebf5" stroke-width="1"/><path d="M51,802.5h8.5" stroke="#e8ebf5" stroke-width="1"/><path d="M59.5,803v8" stroke="#e8ebf5" stroke-width="1"/><path d="M118.9,803v8" stroke="#e8ebf5" stroke-width="1"/><path d="M178.4,803v8" stroke="#e8ebf5" stroke-width="1"/><path d="M237.8,803v8" stroke="#e8ebf5" stroke-width="1"/><path d="M297.2,803v8" stroke="#e8ebf5" stroke-width="1"/><path d="M356.6,803v8" stroke="#e8ebf5" stroke-width="1"/><path d="M416.1,803v8" stroke="#e8ebf5" stroke-width="1"/><path d="M475.5,803v8" stroke="#e8ebf5" stroke-width="1"/><path d="M534.9,803v8" stroke="#e8ebf5" stroke-width="1"/><path d="M594.4,803v8" stroke="#e8ebf5" stroke-width="1"/><path d="M653.8,803v8" stroke="#e8ebf5" stroke-width="1"/><path d="M713.2,803v8" stroke="#e8ebf5" stroke-width="1"/><path d="M772.7,803v8" stroke="#e8ebf5" stroke-width="1"/><path d="M89.90,642.12 C99.79,640.21 129.47,630.70 149.25,630.64 C169.03,630.57 188.82,638.16 208.60,641.72 C228.38,645.29 248.17,651.43 267.95,652.02 C287.73,652.61 307.52,647.66 327.30,645.29 C347.08,642.91 366.87,637.50 386.65,637.76 C406.43,638.03 426.22,645.75 446.00,646.87 C465.78,647.99 485.57,644.56 505.35,644.50 C525.13,644.43 544.92,647.60 564.70,646.48 C584.48,645.35 604.27,638.69 624.05,637.76 C643.83,636.84 663.62,638.42 683.40,640.93 C703.18,643.44 732.86,650.83 742.75,652.81 L742.75,723.3 L89.90,723.3 Z" fill="#e7edf4"/><path d="M89.90,642.12 C99.79,640.21 129.47,630.70 149.25,630.64 C169.03,630.57 188.82,638.16 208.60,641.72 C228.38,645.29 248.17,651.43 267.95,652.02 C287.73,652.61 307.52,647.66 327.30,645.29 C347.08,642.91 366.87,637.50 386.65,637.76 C406.43,638.03 426.22,645.75 446.00,646.87 C465.78,647.99 485.57,644.56 505.35,644.50 C525.13,644.43 544.92,647.60 564.70,646.48 C584.48,645.35 604.27,638.69 624.05,637.76 C643.83,636.84 663.62,638.42 683.40,640.93 C703.18,643.44 732.86,650.83 742.75,652.81" fill="none" stroke="#dce6ee" stroke-width="1"/><path d="M89.90,754.19 C99.79,754.85 129.47,759.47 149.25,758.15 C169.03,756.83 188.82,746.93 208.60,746.27 C228.38,745.61 248.17,753.46 267.95,754.19 C287.73,754.91 307.52,750.23 327.30,750.62 C347.08,751.02 366.87,755.71 386.65,756.56 C406.43,757.42 426.22,755.97 446.00,755.77 C465.78,755.57 485.57,754.45 505.35,755.38 C525.13,756.30 544.92,760.00 564.70,761.32 C584.48,762.64 604.27,762.31 624.05,763.30 C643.83,764.29 663.62,768.97 683.40,767.26 C703.18,765.54 732.86,755.38 742.75,753.00 L742.75,723.3 L89.90,723.3 Z" fill="#dfe5f3"/><path d="M89.90,754.19 C99.79,754.85 129.47,759.47 149.25,758.15 C169.03,756.83 188.82,746.93 208.60,746.27 C228.38,745.61 248.17,753.46 267.95,754.19 C287.73,754.91 307.52,750.23 327.30,750.62 C347.08,751.02 366.87,755.71 386.65,756.56 C406.43,757.42 426.22,755.97 446.00,755.77 C465.78,755.57 485.57,754.45 505.35,755.38 C525.13,756.30 544.92,760.00 564.70,761.32 C584.48,762.64 604.27,762.31 624.05,763.30 C643.83,764.29 663.62,768.97 683.40,767.26 C703.18,765.54 732.86,755.38 742.75,753.00" fill="none" stroke="#d5ddf0" stroke-width="1"/><rect x="65.20" y="673.01" width="49.4" height="50.29" fill="#d9e6dc"/><rect x="124.55" y="665.48" width="49.4" height="57.82" fill="#d9e6dc"/><rect x="183.90" y="664.69" width="49.4" height="58.61" fill="#d9e6dc"/><rect x="243.25" y="682.91" width="49.4" height="40.39" fill="#d9e6dc"/><rect x="302.60" y="672.61" width="49.4" height="50.69" fill="#d9e6dc"/><rect x="361.95" y="671.03" width="49.4" height="52.27" fill="#d9e6dc"/><rect x="421.30" y="679.34" width="49.4" height="43.96" fill="#d9e6dc"/><rect x="480.65" y="676.57" width="49.4" height="46.73" fill="#d9e6dc"/><rect x="540.00" y="684.49" width="49.4" height="38.81" fill="#d9e6dc"/><rect x="599.35" y="677.76" width="49.4" height="45.54" fill="#d9e6dc"/><rect x="658.70" y="684.89" width="49.4" height="38.41" fill="#d9e6dc"/><rect x="718.05" y="682.51" width="49.4" height="40.79" fill="#d9e6dc"/><circle cx="89.90" cy="642.12" r="4" fill="#d8e6ee"/><circle cx="149.25" cy="630.64" r="4" fill="#d8e6ee"/><circle cx="208.60" cy="641.72" r="4" fill="#d8e6ee"/><circle cx="267.95" cy="652.02" r="4" fill="#d8e6ee"/><circle cx="327.30" cy="645.29" r="4" fill="#d8e6ee"/><circle cx="386.65" cy="637.76" r="4" fill="#d8e6ee"/><circle cx="446.00" cy="646.87" r="4" fill="#d8e6ee"/><circle cx="505.35" cy="644.50" r="4" fill="#d8e6ee"/><circle cx="564.70" cy="646.48" r="4" fill="#d8e6ee"/><circle cx="624.05" cy="637.76" r="4" fill="#d8e6ee"/><circle cx="683.40" cy="640.93" r="4" fill="#d8e6ee"/><circle cx="742.75" cy="652.81" r="4" fill="#d8e6ee"/><path d="M89.90,750.19l4,4l-4,4l-4,-4z" fill="#cfd9f0"/><path d="M149.25,754.15l4,4l-4,4l-4,-4z" fill="#cfd9f0"/><path d="M208.60,742.27l4,4l-4,4l-4,-4z" fill="#cfd9f0"/><path d="M267.95,750.19l4,4l-4,4l-4,-4z" fill="#cfd9f0"/><path d="M327.30,746.62l4,4l-4,4l-4,-4z" fill="#cfd9f0"/><path d="M386.65,752.56l4,4l-4,4l-4,-4z" fill="#cfd9f0"/><path d="M446.00,751.77l4,4l-4,4l-4,-4z" fill="#cfd9f0"/><path d="M505.35,751.38l4,4l-4,4l-4,-4z" fill="#cfd9f0"/><path d="M564.70,757.32l4,4l-4,4l-4,-4z" fill="#cfd9f0"/><path d="M624.05,759.30l4,4l-4,4l-4,-4z" fill="#cfd9f0"/><path d="M683.40,763.26l4,4l-4,4l-4,-4z" fill="#cfd9f0"/><path d="M742.75,749.00l4,4l-4,4l-4,-4z" fill="#cfd9f0"/><circle cx="232" cy="862.4" r="5.5" fill="#d9e6dc"/><circle cx="310" cy="862.4" r="4.5" fill="#dde9f0"/><path d="M404,862.4l-4,-4l-4,4l4,4z" transform="translate(3,0)" fill="#d2dcf0"/></svg>
<div style="position:absolute;right:1553.6px;top:599.9px;font-size:9.5px;line-height:9.5px;font-weight:400;color:#c4c4c4;white-space:nowrap;">300</div>
<div style="position:absolute;right:1553.6px;top:639.5px;font-size:9.5px;line-height:9.5px;font-weight:400;color:#c4c4c4;white-space:nowrap;">200</div>
<div style="position:absolute;right:1553.6px;top:679.1px;font-size:9.5px;line-height:9.5px;font-weight:400;color:#c4c4c4;white-space:nowrap;">100</div>
<div style="position:absolute;right:1553.6px;top:718.7px;font-size:9.5px;line-height:9.5px;font-weight:400;color:#c4c4c4;white-space:nowrap;">0</div>
<div style="position:absolute;right:1553.6px;top:758.3px;font-size:9.5px;line-height:9.5px;font-weight:400;color:#c4c4c4;white-space:nowrap;">-100</div>
<div style="position:absolute;right:1553.6px;top:797.9px;font-size:9.5px;line-height:9.5px;font-weight:400;color:#c4c4c4;white-space:nowrap;">-200</div>
<div style="position:absolute;left:-410.1px;width:1000px;text-align:center;top:626.6px;font-size:9.2px;line-height:9.2px;font-weight:400;color:#c4c4c4;white-space:nowrap;">205.00</div>
<div style="position:absolute;left:-410.1px;width:1000px;text-align:center;top:658.0px;font-size:9.2px;line-height:9.2px;font-weight:400;color:#c4c4c4;white-space:nowrap;">127</div>
<div style="position:absolute;left:-410.1px;width:1000px;text-align:center;top:738.7px;font-size:9.2px;line-height:9.2px;font-weight:400;color:#c4c4c4;white-space:nowrap;">-78</div>
<div style="position:absolute;left:-410.1px;width:1000px;text-align:center;top:812.0px;font-size:9.5px;line-height:9.5px;font-weight:400;color:#c4c4c4;white-space:nowrap;">2020 -</div>
<div style="position:absolute;left:-410.1px;width:1000px;text-align:center;top:825.0px;font-size:9.5px;line-height:9.5px;font-weight:400;color:#c4c4c4;white-space:nowrap;">October</div>
<div style="position:absolute;left:-350.8px;width:1000px;text-align:center;top:615.1px;font-size:9.2px;line-height:9.2px;font-weight:400;color:#c4c4c4;white-space:nowrap;">234.00</div>
<div style="position:absolute;left:-350.8px;width:1000px;text-align:center;top:650.5px;font-size:9.2px;line-height:9.2px;font-weight:400;color:#c4c4c4;white-space:nowrap;">146</div>
<div style="position:absolute;left:-350.8px;width:1000px;text-align:center;top:742.7px;font-size:9.2px;line-height:9.2px;font-weight:400;color:#c4c4c4;white-space:nowrap;">-88</div>
<div style="position:absolute;left:-350.8px;width:1000px;text-align:center;top:812.0px;font-size:9.5px;line-height:9.5px;font-weight:400;color:#c4c4c4;white-space:nowrap;">2020 -</div>
<div style="position:absolute;left:-350.8px;width:1000px;text-align:center;top:825.0px;font-size:9.5px;line-height:9.5px;font-weight:400;color:#c4c4c4;white-space:nowrap;">November</div>
<div style="position:absolute;left:-291.4px;width:1000px;text-align:center;top:626.2px;font-size:9.2px;line-height:9.2px;font-weight:400;color:#c4c4c4;white-space:nowrap;">206.00</div>
<div style="position:absolute;left:-291.4px;width:1000px;text-align:center;top:649.7px;font-size:9.2px;line-height:9.2px;font-weight:400;color:#c4c4c4;white-space:nowrap;">148</div>
<div style="position:absolute;left:-291.4px;width:1000px;text-align:center;top:730.8px;font-size:9.2px;line-height:9.2px;font-weight:400;color:#c4c4c4;white-space:nowrap;">-58</div>
<div style="position:absolute;left:-291.4px;width:1000px;text-align:center;top:812.0px;font-size:9.5px;line-height:9.5px;font-weight:400;color:#c4c4c4;white-space:nowrap;">2020 -</div>
<div style="position:absolute;left:-291.4px;width:1000px;text-align:center;top:825.0px;font-size:9.5px;line-height:9.5px;font-weight:400;color:#c4c4c4;white-space:nowrap;">December</div>
<div style="position:absolute;left:-232.0px;width:1000px;text-align:center;top:636.5px;font-size:9.2px;line-height:9.2px;font-weight:400;color:#c4c4c4;white-space:nowrap;">180.00</div>
<div style="position:absolute;left:-232.0px;width:1000px;text-align:center;top:667.9px;font-size:9.2px;line-height:9.2px;font-weight:400;color:#c4c4c4;white-space:nowrap;">102</div>
<div style="position:absolute;left:-232.0px;width:1000px;text-align:center;top:738.7px;font-size:9.2px;line-height:9.2px;font-weight:400;color:#c4c4c4;white-space:nowrap;">-78</div>
<div style="position:absolute;left:-232.0px;width:1000px;text-align:center;top:812.0px;font-size:9.5px;line-height:9.5px;font-weight:400;color:#c4c4c4;white-space:nowrap;">2021 -</div>
<div style="position:absolute;left:-232.0px;width:1000px;text-align:center;top:825.0px;font-size:9.5px;line-height:9.5px;font-weight:400;color:#c4c4c4;white-space:nowrap;">January</div>
<div style="position:absolute;left:-172.7px;width:1000px;text-align:center;top:629.8px;font-size:9.2px;line-height:9.2px;font-weight:400;color:#c4c4c4;white-space:nowrap;">197.00</div>
<div style="position:absolute;left:-172.7px;width:1000px;text-align:center;top:657.6px;font-size:9.2px;line-height:9.2px;font-weight:400;color:#c4c4c4;white-space:nowrap;">128</div>
<div style="position:absolute;left:-172.7px;width:1000px;text-align:center;top:735.1px;font-size:9.2px;line-height:9.2px;font-weight:400;color:#c4c4c4;white-space:nowrap;">-69</div>
<div style="position:absolute;left:-172.7px;width:1000px;text-align:center;top:812.0px;font-size:9.5px;line-height:9.5px;font-weight:400;color:#c4c4c4;white-space:nowrap;">2021 -</div>
<div style="position:absolute;left:-172.7px;width:1000px;text-align:center;top:825.0px;font-size:9.5px;line-height:9.5px;font-weight:400;color:#c4c4c4;white-space:nowrap;">February</div>
<div style="position:absolute;left:-113.4px;width:1000px;text-align:center;top:622.3px;font-size:9.2px;line-height:9.2px;font-weight:400;color:#c4c4c4;white-space:nowrap;">216.00</div>
<div style="position:absolute;left:-113.4px;width:1000px;text-align:center;top:656.0px;font-size:9.2px;line-height:9.2px;font-weight:400;color:#c4c4c4;white-space:nowrap;">132</div>
<div style="position:absolute;left:-113.4px;width:1000px;text-align:center;top:741.1px;font-size:9.2px;line-height:9.2px;font-weight:400;color:#c4c4c4;white-space:nowrap;">-84</div>
<div style="position:absolute;left:-113.4px;width:1000px;text-align:center;top:812.0px;font-size:9.5px;line-height:9.5px;font-weight:400;color:#c4c4c4;white-space:nowrap;">2021 -</div>
<div style="position:absolute;left:-113.4px;width:1000px;text-align:center;top:825.0px;font-size:9.5px;line-height:9.5px;font-weight:400;color:#c4c4c4;white-space:nowrap;">March</div>
<div style="position:absolute;left:-54.0px;width:1000px;text-align:center;top:631.4px;font-size:9.2px;line-height:9.2px;font-weight:400;color:#c4c4c4;white-space:nowrap;">193.00</div>
<div style="position:absolute;left:-54.0px;width:1000px;text-align:center;top:664.3px;font-size:9.2px;line-height:9.2px;font-weight:400;color:#c4c4c4;white-space:nowrap;">111</div>
<div style="position:absolute;left:-54.0px;width:1000px;text-align:center;top:740.3px;font-size:9.2px;line-height:9.2px;font-weight:400;color:#c4c4c4;white-space:nowrap;">-82</div>
<div style="position:absolute;left:-54.0px;width:1000px;text-align:center;top:812.0px;font-size:9.5px;line-height:9.5px;font-weight:400;color:#c4c4c4;white-space:nowrap;">2021 - April</div>
<div style="position:absolute;left:5.4px;width:1000px;text-align:center;top:629.0px;font-size:9.2px;line-height:9.2px;font-weight:400;color:#c4c4c4;white-space:nowrap;">199.00</div>
<div style="position:absolute;left:5.4px;width:1000px;text-align:center;top:661.6px;font-size:9.2px;line-height:9.2px;font-weight:400;color:#c4c4c4;white-space:nowrap;">118</div>
<div style="position:absolute;left:5.4px;width:1000px;text-align:center;top:739.9px;font-size:9.2px;line-height:9.2px;font-weight:400;color:#c4c4c4;white-space:nowrap;">-81</div>
<div style="position:absolute;left:5.4px;width:1000px;text-align:center;top:812.0px;font-size:9.5px;line-height:9.5px;font-weight:400;color:#c4c4c4;white-space:nowrap;">2021 - May</div>
<div style="position:absolute;left:64.7px;width:1000px;text-align:center;top:631.0px;font-size:9.2px;line-height:9.2px;font-weight:400;color:#c4c4c4;white-space:nowrap;">194.00</div>
<div style="position:absolute;left:64.7px;width:1000px;text-align:center;top:669.5px;font-size:9.2px;line-height:9.2px;font-weight:400;color:#c4c4c4;white-space:nowrap;">98</div>
<div style="position:absolute;left:64.7px;width:1000px;text-align:center;top:745.8px;font-size:9.2px;line-height:9.2px;font-weight:400;color:#c4c4c4;white-space:nowrap;">-96</div>
<div style="position:absolute;left:64.7px;width:1000px;text-align:center;top:812.0px;font-size:9.5px;line-height:9.5px;font-weight:400;color:#c4c4c4;white-space:nowrap;">2021 - June</div>
<div style="position:absolute;left:124.0px;width:1000px;text-align:center;top:622.3px;font-size:9.2px;line-height:9.2px;font-weight:400;color:#c4c4c4;white-space:nowrap;">216.00</div>
<div style="position:absolute;left:124.0px;width:1000px;text-align:center;top:662.8px;font-size:9.2px;line-height:9.2px;font-weight:400;color:#c4c4c4;white-space:nowrap;">115</div>
<div style="position:absolute;left:124.0px;width:1000px;text-align:center;top:747.8px;font-size:9.2px;line-height:9.2px;font-weight:400;color:#c4c4c4;white-space:nowrap;">-101</div>
<div style="position:absolute;left:124.0px;width:1000px;text-align:center;top:812.0px;font-size:9.5px;line-height:9.5px;font-weight:400;color:#c4c4c4;white-space:nowrap;">2021 - July</div>
<div style="position:absolute;left:183.4px;width:1000px;text-align:center;top:625.4px;font-size:9.2px;line-height:9.2px;font-weight:400;color:#c4c4c4;white-space:nowrap;">208.00</div>
<div style="position:absolute;left:183.4px;width:1000px;text-align:center;top:669.9px;font-size:9.2px;line-height:9.2px;font-weight:400;color:#c4c4c4;white-space:nowrap;">97</div>
<div style="position:absolute;left:183.4px;width:1000px;text-align:center;top:751.8px;font-size:9.2px;line-height:9.2px;font-weight:400;color:#c4c4c4;white-space:nowrap;">-111</div>
<div style="position:absolute;left:183.4px;width:1000px;text-align:center;top:812.0px;font-size:9.5px;line-height:9.5px;font-weight:400;color:#c4c4c4;white-space:nowrap;">2021 -</div>
<div style="position:absolute;left:183.4px;width:1000px;text-align:center;top:825.0px;font-size:9.5px;line-height:9.5px;font-weight:400;color:#c4c4c4;white-space:nowrap;">August</div>
<div style="position:absolute;left:242.8px;width:1000px;text-align:center;top:637.3px;font-size:9.2px;line-height:9.2px;font-weight:400;color:#c4c4c4;white-space:nowrap;">178.00</div>
<div style="position:absolute;left:242.8px;width:1000px;text-align:center;top:667.5px;font-size:9.2px;line-height:9.2px;font-weight:400;color:#c4c4c4;white-space:nowrap;">103</div>
<div style="position:absolute;left:242.8px;width:1000px;text-align:center;top:737.5px;font-size:9.2px;line-height:9.2px;font-weight:400;color:#c4c4c4;white-space:nowrap;">-75</div>
<div style="position:absolute;left:242.8px;width:1000px;text-align:center;top:812.0px;font-size:9.5px;line-height:9.5px;font-weight:400;color:#c4c4c4;white-space:nowrap;">2021 -</div>
<div style="position:absolute;left:242.8px;width:1000px;text-align:center;top:825.0px;font-size:9.5px;line-height:9.5px;font-weight:400;color:#c4c4c4;white-space:nowrap;">September</div>
<div style="position:absolute;left:242.5px;top:857.9px;font-size:9.3px;line-height:9.3px;font-weight:400;color:#c4c4c4;white-space:nowrap;">Hires (Net)</div>
<div style="position:absolute;left:320.0px;top:857.9px;font-size:9.3px;line-height:9.3px;font-weight:400;color:#c4c4c4;white-space:nowrap;">Hires - External</div>
<div style="position:absolute;left:417.0px;top:857.9px;font-size:9.3px;line-height:9.3px;font-weight:400;color:#c4c4c4;white-space:nowrap;">Terminations (Total) - Negative Value</div>
<svg style="left:0;top:0" width="1600" height="874"><path d="M868.8,605v212M868.8,815.5H1438" stroke="#e8ebf5" stroke-width="1" fill="none"/><path d="M860,815.2h8.8" stroke="#e8ebf5" stroke-width="1"/><path d="M860,773.2h8.8" stroke="#e8ebf5" stroke-width="1"/><path d="M860,731.2h8.8" stroke="#e8ebf5" stroke-width="1"/><path d="M860,689.2h8.8" stroke="#e8ebf5" stroke-width="1"/><path d="M860,647.2h8.8" stroke="#e8ebf5" stroke-width="1"/><path d="M860,605.2h8.8" stroke="#e8ebf5" stroke-width="1"/><path d="M869.5,815.5v8" stroke="#e8ebf5" stroke-width="1"/><path d="M921.2,815.5v8" stroke="#e8ebf5" stroke-width="1"/><path d="M972.9,815.5v8" stroke="#e8ebf5" stroke-width="1"/><path d="M1024.6,815.5v8" stroke="#e8ebf5" stroke-width="1"/><path d="M1076.3,815.5v8" stroke="#e8ebf5" stroke-width="1"/><path d="M1128.0,815.5v8" stroke="#e8ebf5" stroke-width="1"/><path d="M1179.7,815.5v8" stroke="#e8ebf5" stroke-width="1"/><path d="M1231.4,815.5v8" stroke="#e8ebf5" stroke-width="1"/><path d="M1283.1,815.5v8" stroke="#e8ebf5" stroke-width="1"/><path d="M1334.8,815.5v8" stroke="#e8ebf5" stroke-width="1"/><path d="M1386.5,815.5v8" stroke="#e8ebf5" stroke-width="1"/><path d="M1438.2,815.5v8" stroke="#e8ebf5" stroke-width="1"/><path d="M895.50,732.57 L947.20,723.03 L998.90,713.70 L1050.60,704.11 L1102.30,695.08 L1154.00,686.26 L1205.70,677.44 L1257.40,668.62 L1309.10,660.22 L1360.80,651.40 L1412.50,643.00 L1412.50,678.28 L1360.80,685.00 L1309.10,692.14 L1257.40,698.86 L1205.70,706.00 L1154.00,713.14 L1102.30,720.28 L1050.60,727.63 L998.90,735.23 L947.20,742.67 L895.50,750.21 Z" fill="#e6edf4"/><path d="M895.50,750.21 L947.20,742.67 L998.90,735.23 L1050.60,727.63 L1102.30,720.28 L1154.00,713.14 L1205.70,706.00 L1257.40,698.86 L1309.10,692.14 L1360.80,685.00 L1412.50,678.28 L1412.50,815.2 L895.50,815.2 Z" fill="#dfe5f3"/><path d="M895.50,732.57 L947.20,723.03 L998.90,713.70 L1050.60,704.11 L1102.30,695.08 L1154.00,686.26 L1205.70,677.44 L1257.40,668.62 L1309.10,660.22 L1360.80,651.40 L1412.50,643.00" fill="none" stroke="#dde7ef" stroke-width="1"/><path d="M895.50,750.21 L947.20,742.67 L998.90,735.23 L1050.60,727.63 L1102.30,720.28 L1154.00,713.14 L1205.70,706.00 L1257.40,698.86 L1309.10,692.14 L1360.80,685.00 L1412.50,678.28" fill="none" stroke="#d3dcf0" stroke-width="1"/><circle cx="895.50" cy="732.57" r="4" fill="#d8e6ee"/><circle cx="947.20" cy="723.03" r="4" fill="#d8e6ee"/><circle cx="998.90" cy="713.70" r="4" fill="#d8e6ee"/><circle cx="1050.60" cy="704.11" r="4" fill="#d8e6ee"/><circle cx="1102.30" cy="695.08" r="4" fill="#d8e6ee"/><circle cx="1154.00" cy="686.26" r="4" fill="#d8e6ee"/><circle cx="1205.70" cy="677.44" r="4" fill="#d8e6ee"/><circle cx="1257.40" cy="668.62" r="4" fill="#d8e6ee"/><circle cx="1309.10" cy="660.22" r="4" fill="#d8e6ee"/><circle cx="1360.80" cy="651.40" r="4" fill="#d8e6ee"/><circle cx="1412.50" cy="643.00" r="4" fill="#d8e6ee"/><path d="M895.50,746.21l4,4l-4,4l-4,-4z" fill="#cfd9f0"/><path d="M947.20,738.67l4,4l-4,4l-4,-4z" fill="#cfd9f0"/><path d="M998.90,731.23l4,4l-4,4l-4,-4z" fill="#cfd9f0"/><path d="M1050.60,723.63l4,4l-4,4l-4,-4z" fill="#cfd9f0"/><path d="M1102.30,716.28l4,4l-4,4l-4,-4z" fill="#cfd9f0"/><path d="M1154.00,709.14l4,4l-4,4l-4,-4z" fill="#cfd9f0"/><path d="M1205.70,702.00l4,4l-4,4l-4,-4z" fill="#cfd9f0"/><path d="M1257.40,694.86l4,4l-4,4l-4,-4z" fill="#cfd9f0"/><path d="M1309.10,688.14l4,4l-4,4l-4,-4z" fill="#cfd9f0"/><path d="M1360.80,681.00l4,4l-4,4l-4,-4z" fill="#cfd9f0"/><path d="M1412.50,674.28l4,4l-4,4l-4,-4z" fill="#cfd9f0"/><circle cx="979" cy="862.5" r="4.5" fill="#dde9f0"/><path d="M1137,858.5l4,4l-4,4l-4,-4z" fill="#d2dcf0"/><path d="M1518,417.5L1551,421.8" stroke="#d4e3ec" stroke-width="1"/><circle cx="1551" cy="421.8" r="3.6" fill="#d8e6ee"/><path d="M1518,446.5H1571.5M1531.7,446.5v8M1571.5,446.5v8" stroke="#e8ebf5" stroke-width="1" fill="none"/></svg>
<div style="position:absolute;right:743.8px;top:810.6px;font-size:9.5px;line-height:9.5px;font-weight:400;color:#c4c4c4;white-space:nowrap;">0</div>
<div style="position:absolute;right:743.8px;top:768.6px;font-size:9.5px;line-height:9.5px;font-weight:400;color:#c4c4c4;white-space:nowrap;">10,000</div>
<div style="position:absolute;right:743.8px;top:726.6px;font-size:9.5px;line-height:9.5px;font-weight:400;color:#c4c4c4;white-space:nowrap;">20,000</div>
<div style="position:absolute;right:743.8px;top:684.6px;font-size:9.5px;line-height:9.5px;font-weight:400;color:#c4c4c4;white-space:nowrap;">30,000</div>
<div style="position:absolute;right:743.8px;top:642.6px;font-size:9.5px;line-height:9.5px;font-weight:400;color:#c4c4c4;white-space:nowrap;">40,000</div>
<div style="position:absolute;right:743.8px;top:600.6px;font-size:9.5px;line-height:9.5px;font-weight:400;color:#c4c4c4;white-space:nowrap;">50,000</div>
<div style="position:absolute;left:395.5px;width:1000px;text-align:center;top:824.7px;font-size:9.5px;line-height:9.5px;font-weight:400;color:#c4c4c4;white-space:nowrap;">2011</div>
<div style="position:absolute;left:395.5px;width:1000px;text-align:center;top:716.6px;font-size:9.2px;line-height:9.2px;font-weight:400;color:#c4c4c4;white-space:nowrap;">4,198</div>
<div style="position:absolute;left:395.5px;width:1000px;text-align:center;top:734.2px;font-size:9.2px;line-height:9.2px;font-weight:400;color:#c4c4c4;white-space:nowrap;">15,475</div>
<div style="position:absolute;left:447.2px;width:1000px;text-align:center;top:824.7px;font-size:9.5px;line-height:9.5px;font-weight:400;color:#c4c4c4;white-space:nowrap;">2012</div>
<div style="position:absolute;left:447.2px;width:1000px;text-align:center;top:707.0px;font-size:9.2px;line-height:9.2px;font-weight:400;color:#c4c4c4;white-space:nowrap;">4,677</div>
<div style="position:absolute;left:447.2px;width:1000px;text-align:center;top:726.7px;font-size:9.2px;line-height:9.2px;font-weight:400;color:#c4c4c4;white-space:nowrap;">17,268</div>
<div style="position:absolute;left:498.9px;width:1000px;text-align:center;top:824.7px;font-size:9.5px;line-height:9.5px;font-weight:400;color:#c4c4c4;white-space:nowrap;">2013</div>
<div style="position:absolute;left:498.9px;width:1000px;text-align:center;top:697.7px;font-size:9.2px;line-height:9.2px;font-weight:400;color:#c4c4c4;white-space:nowrap;">5,127</div>
<div style="position:absolute;left:498.9px;width:1000px;text-align:center;top:719.2px;font-size:9.2px;line-height:9.2px;font-weight:400;color:#c4c4c4;white-space:nowrap;">19,040</div>
<div style="position:absolute;left:550.6px;width:1000px;text-align:center;top:824.7px;font-size:9.5px;line-height:9.5px;font-weight:400;color:#c4c4c4;white-space:nowrap;">2014</div>
<div style="position:absolute;left:550.6px;width:1000px;text-align:center;top:688.1px;font-size:9.2px;line-height:9.2px;font-weight:400;color:#c4c4c4;white-space:nowrap;">5,600</div>
<div style="position:absolute;left:550.6px;width:1000px;text-align:center;top:711.6px;font-size:9.2px;line-height:9.2px;font-weight:400;color:#c4c4c4;white-space:nowrap;">20,850</div>
<div style="position:absolute;left:602.3px;width:1000px;text-align:center;top:824.7px;font-size:9.5px;line-height:9.5px;font-weight:400;color:#c4c4c4;white-space:nowrap;">2015</div>
<div style="position:absolute;left:602.3px;width:1000px;text-align:center;top:679.1px;font-size:9.2px;line-height:9.2px;font-weight:400;color:#c4c4c4;white-space:nowrap;">6,000</div>
<div style="position:absolute;left:602.3px;width:1000px;text-align:center;top:704.3px;font-size:9.2px;line-height:9.2px;font-weight:400;color:#c4c4c4;white-space:nowrap;">22,600</div>
<div style="position:absolute;left:654.0px;width:1000px;text-align:center;top:824.7px;font-size:9.5px;line-height:9.5px;font-weight:400;color:#c4c4c4;white-space:nowrap;">2016</div>
<div style="position:absolute;left:654.0px;width:1000px;text-align:center;top:670.3px;font-size:9.2px;line-height:9.2px;font-weight:400;color:#c4c4c4;white-space:nowrap;">6,400</div>
<div style="position:absolute;left:654.0px;width:1000px;text-align:center;top:697.1px;font-size:9.2px;line-height:9.2px;font-weight:400;color:#c4c4c4;white-space:nowrap;">24,300</div>
<div style="position:absolute;left:705.7px;width:1000px;text-align:center;top:824.7px;font-size:9.5px;line-height:9.5px;font-weight:400;color:#c4c4c4;white-space:nowrap;">2017</div>
<div style="position:absolute;left:705.7px;width:1000px;text-align:center;top:661.4px;font-size:9.2px;line-height:9.2px;font-weight:400;color:#c4c4c4;white-space:nowrap;">6,800</div>
<div style="position:absolute;left:705.7px;width:1000px;text-align:center;top:690.0px;font-size:9.2px;line-height:9.2px;font-weight:400;color:#c4c4c4;white-space:nowrap;">26,000</div>
<div style="position:absolute;left:757.4px;width:1000px;text-align:center;top:824.7px;font-size:9.5px;line-height:9.5px;font-weight:400;color:#c4c4c4;white-space:nowrap;">2018</div>
<div style="position:absolute;left:757.4px;width:1000px;text-align:center;top:652.6px;font-size:9.2px;line-height:9.2px;font-weight:400;color:#c4c4c4;white-space:nowrap;">7,200</div>
<div style="position:absolute;left:757.4px;width:1000px;text-align:center;top:682.9px;font-size:9.2px;line-height:9.2px;font-weight:400;color:#c4c4c4;white-space:nowrap;">27,700</div>
<div style="position:absolute;left:809.1px;width:1000px;text-align:center;top:824.7px;font-size:9.5px;line-height:9.5px;font-weight:400;color:#c4c4c4;white-space:nowrap;">2019</div>
<div style="position:absolute;left:809.1px;width:1000px;text-align:center;top:644.2px;font-size:9.2px;line-height:9.2px;font-weight:400;color:#c4c4c4;white-space:nowrap;">7,600</div>
<div style="position:absolute;left:809.1px;width:1000px;text-align:center;top:676.1px;font-size:9.2px;line-height:9.2px;font-weight:400;color:#c4c4c4;white-space:nowrap;">29,300</div>
<div style="position:absolute;left:860.8px;width:1000px;text-align:center;top:824.7px;font-size:9.5px;line-height:9.5px;font-weight:400;color:#c4c4c4;white-space:nowrap;">2020</div>
<div style="position:absolute;left:860.8px;width:1000px;text-align:center;top:635.4px;font-size:9.2px;line-height:9.2px;font-weight:400;color:#c4c4c4;white-space:nowrap;">8,000</div>
<div style="position:absolute;left:860.8px;width:1000px;text-align:center;top:669.0px;font-size:9.2px;line-height:9.2px;font-weight:400;color:#c4c4c4;white-space:nowrap;">31,000</div>
<div style="position:absolute;left:912.5px;width:1000px;text-align:center;top:824.7px;font-size:9.5px;line-height:9.5px;font-weight:400;color:#c4c4c4;white-space:nowrap;">2021</div>
<div style="position:absolute;left:912.5px;width:1000px;text-align:center;top:627.0px;font-size:9.2px;line-height:9.2px;font-weight:400;color:#c4c4c4;white-space:nowrap;">8,400</div>
<div style="position:absolute;left:912.5px;width:1000px;text-align:center;top:662.3px;font-size:9.2px;line-height:9.2px;font-weight:400;color:#c4c4c4;white-space:nowrap;">32,600</div>
<div style="position:absolute;left:988.0px;top:858.0px;font-size:9.3px;line-height:9.3px;font-weight:400;color:#c4c4c4;white-space:nowrap;">Headcount (EOP): Managerial</div>
<div style="position:absolute;left:1147.0px;top:858.0px;font-size:9.3px;line-height:9.3px;font-weight:400;color:#c4c4c4;white-space:nowrap;">Headcount (EOP): Non-Managerial</div>
<div style="position:absolute;left:1051.0px;width:1000px;text-align:center;top:406.4px;font-size:9.2px;line-height:9.2px;font-weight:400;color:#c4c4c4;white-space:nowrap;">4.66</div>
<div style="position:absolute;left:1051.0px;width:1000px;text-align:center;top:455.5px;font-size:9.2px;line-height:9.2px;font-weight:400;color:#c4c4c4;white-space:nowrap;">2021</div>
<div style="position:absolute;left:1056px;top:176px;width:462px;height:598px;background:#fff;box-shadow:0 0 1.5px 0.5px rgba(0,0,0,0.55),0 0 9px 2px rgba(0,0,0,0.28);overflow:hidden;border-radius:0 0 2px 2px;">
<div style="position:absolute;left:0;top:0;width:462px;height:14.5px;background:#444;border-bottom:1px solid #222;"></div>
<div style="position:absolute;left:454px;top:74px;width:8px;height:523px;background:#ececec;"></div>
<div style="position:absolute;left:453.5px;top:75px;width:8.5px;height:192.5px;background:#bababa;border-radius:4px;"></div>
<div style="position:absolute;left:352px;top:594px;width:63px;height:30px;background:#a6dcf3;border-radius:15px;"></div>
<svg style="left:450px;top:586px" width="12" height="12"><path d="M11,3L3,11M11,7L7,11" stroke="#999" stroke-width="1"/></svg>
</div>
<div style="position:absolute;left:1079.00px;top:213.00px;font-size:17.318px;line-height:17.318px;font-weight:400;color:#2a2a2a;white-space:nowrap;transform:scaleX(0.9942);transform-origin:0 0;-webkit-text-stroke:0.45px #2a2a2a;">Tile Settings</div>
<svg style="left:0;top:0" width="1600" height="874" fill="none"><circle cx="1480.8" cy="220.4" r="9" stroke="#333" stroke-width="1.2"/><path d="M1477.2,216.8l7.6,7.6M1484.8,216.8l-7.6,7.6" stroke="#333" stroke-width="1.2"/><path d="M1078.5,250.5H1496" stroke="#cfcfcf" stroke-width="1"/><path d="M1081.4,317.8l4.3,4.3l4.3,-4.3M1081.4,352.9l4.3,4.3l4.3,-4.3M1081.4,743.6l4.3,4.3l4.3,-4.3" stroke="#444" stroke-width="1.05"/><path d="M1078.7,727.5H1487.5" stroke="#d5d5d5" stroke-width="1"/><g stroke="#333" stroke-width="1.1" fill="none"><path d="M1100.6,274.6 A7.1,7.6 0 0 0 1114.9,274.4"/><path d="M1100.6,274.6 Q1104.5,274.3 1105.6,272.3 Q1106.4,270.6 1105.8,269.8M1104.6,269.9l2.4,-0.6"/><path d="M1109,274.2 l0.4,-2 l4.4,-4.4 l1.7,1.7 l-4.4,4.4z" stroke-width="1"/></g><g fill="#333"><circle cx="1112.6" cy="275.6" r="1"/><circle cx="1103.4" cy="277.2" r="0.9"/><circle cx="1107.2" cy="278.6" r="0.9"/><circle cx="1110.9" cy="278" r="0.8"/></g></svg>
<div style="position:absolute;left:1100.5px;top:295.3px;width:64.5px;height:3.8px;background:#a6dcf3;"></div>
<div style="position:absolute;left:1123.10px;top:269.50px;font-size:13.408px;line-height:13.408px;font-weight:400;color:#2a2a2a;white-space:nowrap;transform:scaleX(0.9883);transform-origin:0 0;-webkit-text-stroke:0.45px #2a2a2a;">Design</div>
<div style="position:absolute;left:1108.40px;top:314.80px;font-size:13.547px;line-height:13.547px;font-weight:400;color:#2a2a2a;white-space:nowrap;transform:scaleX(1.0067);transform-origin:0 0;-webkit-text-stroke:0.45px #2a2a2a;">Data Visualization</div>
<div style="position:absolute;left:1108.4px;top:349.1px;font-size:13.3px;line-height:13.3px;font-weight:400;color:#555;white-space:nowrap;">General</div>
<div style="position:absolute;left:1108.9px;top:740.0px;font-size:13.5px;line-height:13.5px;font-weight:400;color:#555;white-space:nowrap;">Stacked Totals</div>
<svg style="left:0;top:0" width="1600" height="874"><path d="M1067.2,511.5 L1117.5,511.5 Q1150,513 1175,515 L1218,514.4 L1326,513.7 L1376,512.7 L1462.5,512.2 Q1480,511 1491,509.8 L1506.4,509.3 L1506.4,542 L1462,543.8 L1376,545.3 L1326,546.7 L1290,546.7 L1218,548.2 L1175,548.2 Q1140,546 1117,544.6 L1067.2,543.8 Z" fill="#ffe500"/></svg>
<div style="position:absolute;left:1079.50px;top:388.50px;font-size:14.106px;line-height:14.106px;font-weight:400;color:#555;white-space:nowrap;transform:scaleX(0.9212);transform-origin:0 0;">Data Label - Size</div>
<div style="position:absolute;left:1079.50px;top:432.65px;font-size:14.106px;line-height:14.106px;font-weight:400;color:#555;white-space:nowrap;transform:scaleX(0.9150);transform-origin:0 0;">Data Label - Colour</div>
<div style="position:absolute;left:1079.50px;top:476.85px;font-size:14.106px;line-height:14.106px;font-weight:400;color:#555;white-space:nowrap;transform:scaleX(0.9150);transform-origin:0 0;">Data Label - Bold</div>
<div style="position:absolute;left:1079.50px;top:520.95px;font-size:14.106px;line-height:14.106px;font-weight:400;color:#3a3a1a;white-space:nowrap;transform:scaleX(0.9496);transform-origin:0 0;">Data Label - Shadow</div>
<div style="position:absolute;left:1079.50px;top:565.65px;font-size:14.106px;line-height:14.106px;font-weight:400;color:#555;white-space:nowrap;transform:scaleX(0.9150);transform-origin:0 0;">Show X Axis Line</div>
<div style="position:absolute;left:1079.50px;top:609.85px;font-size:14.106px;line-height:14.106px;font-weight:400;color:#555;white-space:nowrap;transform:scaleX(0.9291);transform-origin:0 0;">Show X Axis Labels</div>
<div style="position:absolute;left:1079.50px;top:654.05px;font-size:14.106px;line-height:14.106px;font-weight:400;color:#555;white-space:nowrap;transform:scaleX(0.9150);transform-origin:0 0;">X Axis Rotation</div>
<div style="position:absolute;left:1079.50px;top:698.25px;font-size:14.106px;line-height:14.106px;font-weight:400;color:#555;white-space:nowrap;transform:scaleX(0.9150);transform-origin:0 0;">Stagger Lines</div>
<div style="position:absolute;left:1322px;top:380.6px;width:161.5px;height:29px;border:1px solid #555;border-radius:2px;"></div>
<div style="position:absolute;left:1338.0px;top:389.5px;font-size:13px;line-height:13px;font-weight:400;color:#777;white-space:nowrap;">11</div>
<svg style="left:0;top:0" width="1600" height="874"><path d="M1455.5,389.2l12,12M1467.5,389.2l-12,12" stroke="#1e1e1e" stroke-width="1.6" fill="none"/></svg>
<div style="position:absolute;left:1322px;top:424.6px;width:124.7px;height:29px;border:1px solid #c94a4a;border-radius:2px;"></div>
<svg style="left:0;top:0" width="1600" height="874"><path d="M1418.5,433.3l12,12M1430.5,433.3l-12,12" stroke="#1e1e1e" stroke-width="1.6" fill="none"/></svg>
<div style="position:absolute;left:1454px;top:424.6px;width:29.5px;height:29px;border:1px solid #777;"></div>
<div style="position:absolute;left:1322px;top:646.3px;width:161.5px;height:29px;border:1px solid #555;border-radius:2px;"></div>
<div style="position:absolute;left:1338.0px;top:655.2px;font-size:13px;line-height:13px;font-weight:400;color:#777;white-space:nowrap;">0</div>
<svg style="left:0;top:0" width="1600" height="874"><path d="M1455.5,654.7l12,12M1467.5,654.7l-12,12" stroke="#1e1e1e" stroke-width="1.6" fill="none"/></svg>
<div style="position:absolute;left:1322px;top:690.9px;width:161.5px;height:29px;border:1px solid #555;border-radius:2px;"></div>
<div style="position:absolute;left:1338.0px;top:699.8px;font-size:13px;line-height:13px;font-weight:400;color:#777;white-space:nowrap;">0</div>
<svg style="left:0;top:0" width="1600" height="874"><path d="M1455.5,699.2l12,12M1467.5,699.2l-12,12" stroke="#1e1e1e" stroke-width="1.6" fill="none"/></svg>
<div style="position:absolute;left:1402px;top:469.2px;width:74px;height:29.3px;border:1px solid #555;border-radius:15px;"></div>
<div style="position:absolute;left:1445.0px;top:478.0px;font-size:13px;line-height:13px;font-weight:400;color:#555;white-space:nowrap;">Off</div>
<svg style="left:0;top:0" width="1600" height="874"><circle cx="1417.3" cy="483.8" r="9.3" fill="#fff" stroke="#444" stroke-width="1.2"/></svg>
<div style="position:absolute;left:1402px;top:513.2px;width:74px;height:29.3px;background:#a6dc00;border-radius:15px;"></div>
<div style="position:absolute;left:1416.5px;top:522.0px;font-size:13px;line-height:13px;font-weight:400;color:#3d4a00;white-space:nowrap;">On</div>
<svg style="left:0;top:0" width="1600" height="874"><circle cx="1462.5" cy="527.9000000000001" r="9.2" fill="#ffe500" stroke="#333" stroke-width="1.2"/></svg>
<div style="position:absolute;left:1402px;top:557.8px;width:74px;height:29.3px;border:1px solid #555;border-radius:15px;"></div>
<div style="position:absolute;left:1445.0px;top:566.6px;font-size:13px;line-height:13px;font-weight:400;color:#555;white-space:nowrap;">Off</div>
<svg style="left:0;top:0" width="1600" height="874"><circle cx="1417.3" cy="572.4" r="9.3" fill="#fff" stroke="#444" stroke-width="1.2"/></svg>
<div style="position:absolute;left:1402px;top:602.3px;width:74px;height:29.3px;background:#a6dcf3;border-radius:15px;"></div>
<div style="position:absolute;left:1416.5px;top:611.1px;font-size:13px;line-height:13px;font-weight:400;color:#555;white-space:nowrap;">On</div>
<svg style="left:0;top:0" width="1600" height="874"><circle cx="1462.5" cy="617.0" r="9.2" fill="#fff" stroke="#333" stroke-width="1.2"/></svg>
</body></html>
